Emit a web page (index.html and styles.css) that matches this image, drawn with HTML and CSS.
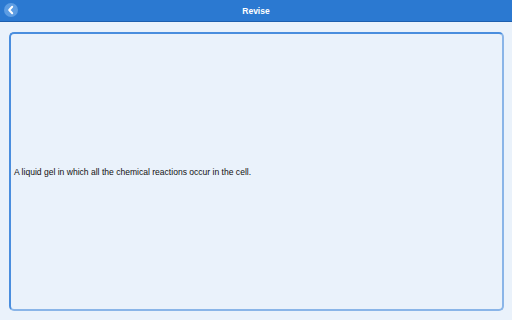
FILE: index.html
```html
<!DOCTYPE html>
<html>
<head>
  <meta charset="UTF-8">
  <title>Revise</title>
  <link rel="stylesheet" href="styles.css">
</head>
<body>

<div class="header">
  <button class="backbtn">
    <svg width="14" height="14" viewBox="0 0 14 14">
      <circle cx="7" cy="7" r="7" fill="#5d9de3"/>
      <path d="M8.2 3.8 L5.2 7 L8.2 10.2" stroke="white" stroke-width="2" fill="none" stroke-linecap="round" stroke-linejoin="round"/>
    </svg>
  </button>
  <div class="title">Revise</div>
</div>

<div class="content">
  <div class="card">
    <p class="cardtext">A liquid gel in which all the chemical reactions occur in the cell.</p>
  </div>
</div>

</body>
</html>
```

FILE: styles.css
```css
body {
  background: #eaf2fb;
  font-family: "Liberation Sans", Arial, sans-serif;
  margin: 0;
  padding: 0;
  width: 512px;
  height: 320px;
  display: flex;
  flex-direction: column;
}
.header {
  height: 21px;
  background: #2b79d1;
  border-bottom: 1px solid #1d5fae;
  display: flex;
  align-items: center;
  justify-content: center;
  position: relative;
}
.backbtn {
  position: absolute;
  left: 4px;
  top: 3px;
  width: 14px;
  height: 14px;
  padding: 0;
  border: none;
  background: none;
  cursor: pointer;
}
.backbtn svg {
  display: block;
}
.title {
  color: white;
  font-size: 8.5px;
  font-weight: bold;
}
.content {
  flex: 1;
  padding: 10px 8px 9px 9px;
  display: flex;
}
.card {
  flex: 1;
  border: 2px solid #8ab5e8;
  border-top-color: #4a8ede;
  border-left-color: #4a8ede;
  border-radius: 5px;
  display: flex;
  align-items: center;
  padding: 0 3px;
}
.cardtext {
  margin: 0;
  font-size: 8.55px;
  color: #111;
}
```
